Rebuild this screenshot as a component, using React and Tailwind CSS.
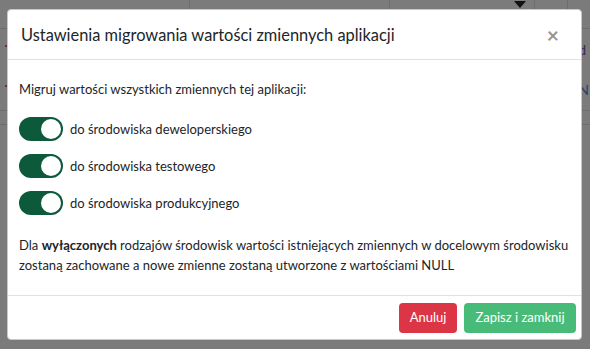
import { useState } from "react";

function Toggle({ on, onChange }) {
  return (
    <button
      type="button"
      onClick={onChange}
      className={`relative flex h-[24px] w-[44px] shrink-0 items-center rounded-full px-[2px] ${
        on ? "justify-end bg-[#0c5a3b]" : "justify-start bg-[#adb5bd]"
      }`}
    >
      <span className="h-[20px] w-[20px] rounded-full bg-white" />
    </button>
  );
}

function Background() {
  // strona pod modalem, przyciemniona
  return (
    <div className="flex h-full flex-col">
      <div className="flex h-[29px] border-b border-[#6d6d6d]">
        <div className="w-[190px] border-r border-[#6d6d6d]" />
        <div className="w-[200px] border-r border-[#6d6d6d]" />
        <div className="flex w-[145px] items-start justify-end border-r border-[#6d6d6d] pr-[8px]">
          <span className="mt-[1px] h-0 w-0 border-x-[6px] border-t-[7px] border-x-transparent border-t-[#111]" />
        </div>
        <div className="w-[33px] border-r border-[#6d6d6d]" />
      </div>
      <div className="flex h-[82px] items-start justify-between border-b border-[#6d6d6d] pl-[5px] pt-[16px]">
        <div className="flex flex-col gap-[38px]">
          <span className="h-[2px] w-[2px] bg-[#7a2a2a]" />
          <span className="h-[2px] w-[2px] bg-[#7a2a2a]" />
        </div>
        <div className="mt-[-2px] flex flex-col gap-[26px] pr-[1px] text-[14px] leading-none">
          <span className="text-[#3b2a55]">d</span>
          <span className="text-[#2a3f66]">N</span>
        </div>
      </div>
      <div className="flex h-[14px] justify-end border-b border-[#6d6d6d]" />
    </div>
  );
}

export default function App() {
  const [dev, setDev] = useState(true);
  const [test, setTest] = useState(true);
  const [prod, setProd] = useState(true);

  const rows = [
    { label: "do środowiska deweloperskiego", on: dev, set: () => setDev(!dev) },
    { label: "do środowiska testowego", on: test, set: () => setTest(!test) },
    { label: "do środowiska produkcyjnego", on: prod, set: () => setProd(!prod) },
  ];

  return (
    <div
      className="relative h-[349px] w-[590px] overflow-hidden bg-[#7b7b7b] text-[#212529]"
      style={{ fontFamily: 'Lato, "Open Sans", sans-serif' }}
    >
      <Background />

      <div className="absolute left-[7px] top-[9px] flex h-[331px] w-[575px] flex-col rounded-[4px] border border-[#c8c8c8] bg-white">
        <div className="flex h-[50px] items-center justify-between border-b border-[#dee2e6] pl-[13px] pr-[22px]">
          <h5 className="text-[16.4px] leading-[26px]">Ustawienia migrowania wartości zmiennych aplikacji</h5>
          <button type="button" className="text-[21px] font-bold leading-none text-[#959595]">
            ×
          </button>
        </div>

        <div className="flex flex-1 flex-col px-[11px] pt-[19px] text-[13px]">
          <p className="leading-[20px]">Migruj wartości wszystkich zmiennych tej aplikacji:</p>
          <div className="mt-[18px] flex flex-col gap-[13px]">
            {rows.map((r) => (
              <label key={r.label} className="flex items-center gap-[7px]">
                <Toggle on={r.on} onChange={r.set} />
                <span className="leading-[20px]">{r.label}</span>
              </label>
            ))}
          </div>
          <p className="mt-[20px] leading-[20px]">
            Dla <b>wyłączonych</b> rodzajów środowisk wartości istniejących zmiennych w docelowym środowisku
            zostaną zachowane a nowe zmienne zostaną utworzone z wartościami NULL
          </p>
        </div>

        <div className="flex h-[44px] items-center justify-end gap-[7px] border-t border-[#dee2e6] px-[5px]">
          <button type="button" className="h-[30px] w-[58px] rounded-[4px] bg-[#dc3545] text-[13px] text-white">
            Anuluj
          </button>
          <button type="button" className="h-[30px] w-[112px] rounded-[4px] bg-[#48bb78] text-[13px] text-white">
            Zapisz i zamknij
          </button>
        </div>
      </div>
    </div>
  );
}
